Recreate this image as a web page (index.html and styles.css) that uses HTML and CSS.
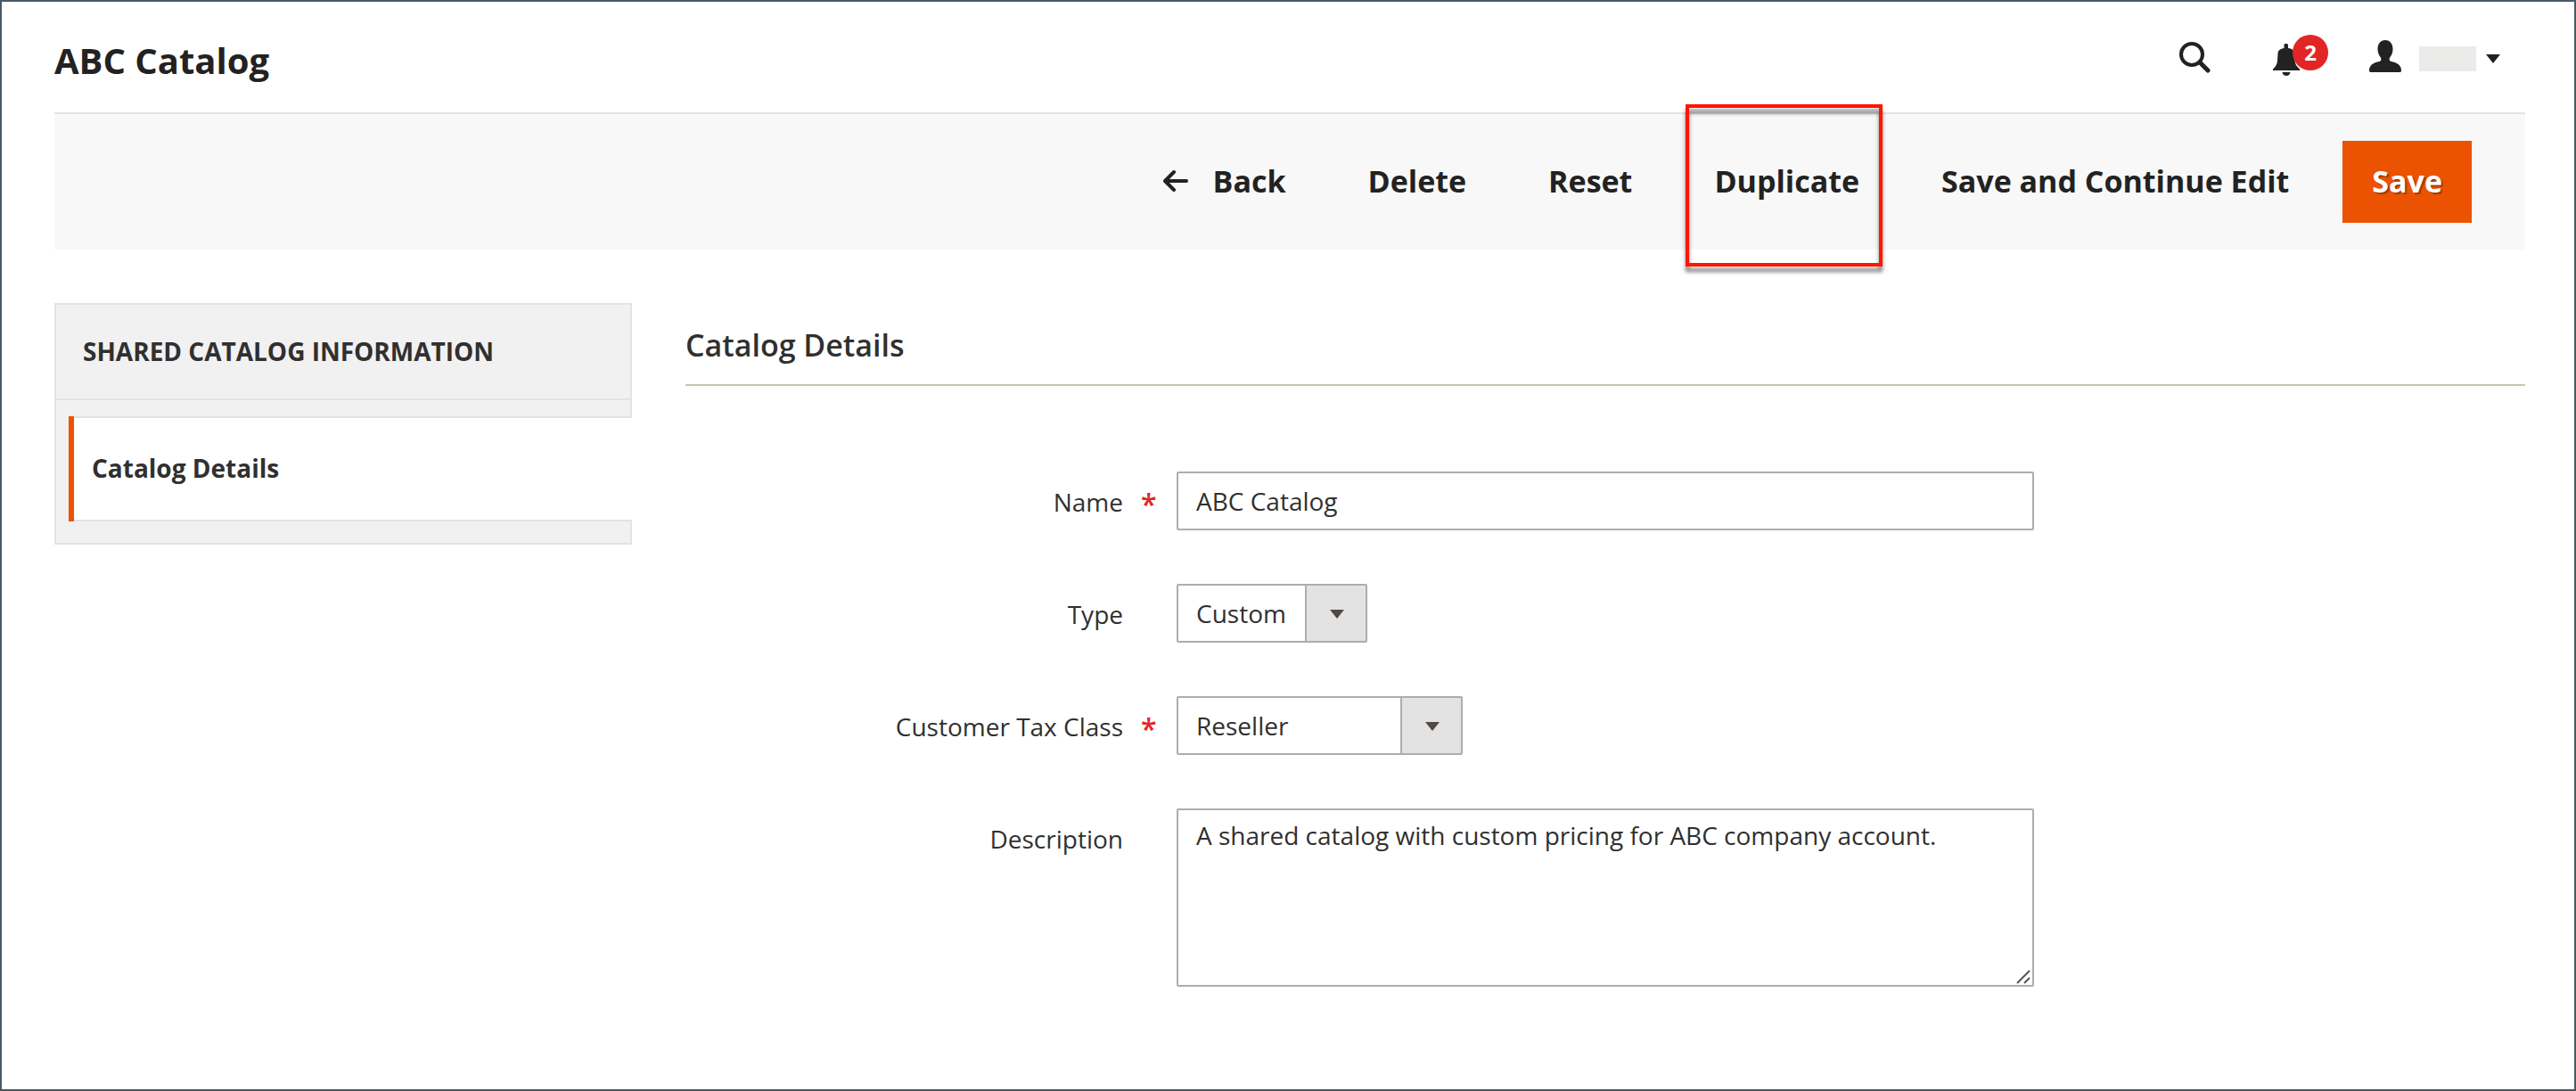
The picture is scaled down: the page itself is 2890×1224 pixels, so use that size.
FILE: index.html
```html
<!DOCTYPE html>
<html lang="en">
<head>
  <meta charset="utf-8">
  <meta name="viewport" content="width=device-width, initial-scale=1">
  <title>ABC Catalog</title>
  <link rel="stylesheet" href="styles.css">
</head>
<body>
  <div class="page">
    <header class="header">
      <h1 class="header-title">ABC Catalog</h1>
      <div class="header-tools">
        <button class="tool" type="button" aria-label="Search">
          <svg class="icon" width="36" height="36" viewBox="0 0 36 36" aria-hidden="true">
            <circle cx="15" cy="15" r="12" fill="none" stroke="currentColor" stroke-width="4"/>
            <path d="M24 24l9 9" stroke="currentColor" stroke-width="5" stroke-linecap="round"/>
          </svg>
        </button>
        <button class="tool tool-bell" type="button" aria-label="Notifications">
          <svg class="icon" width="30" height="36" viewBox="0 0 30 36" aria-hidden="true">
            <path fill="currentColor" d="M12.500 5V2a2 2 0 0 1 4.500 0v3c5 .6 7.500 3 7.500 7v5c0 6 2 8 5.500 11.500V30H0v-1.500C4 25 5 22 5.200 16l.3-5c.2-3.600 3-5.500 7-6z"/>
            <path fill="currentColor" d="M10.500 32h9c-.5 2.500-2 4-4.500 4s-4-1.500-4.500-4z"/>
          </svg>
          <span class="badge">2</span>
        </button>
        <button class="tool tool-user" type="button" aria-label="Account">
          <svg class="icon" width="36" height="36" viewBox="0 0 36 36" aria-hidden="true">
            <path fill="currentColor" d="M18 0c5.500 0 8.500 4.500 8.500 10 0 4-1.500 7.500-3.500 9.800-.8 1.500-.5 3.700 1.500 4.200C31.500 25 36 28.500 36 34c0 1.200-.4 2-1.500 2h-33C.4 36 0 35.200 0 34c0-5.500 4.500-9 11.500-10 2-.5 2.300-2.700 1.500-4.200C11 17.500 9.500 14 9.500 10 9.500 4.500 12.500 0 18 0z"/>
          </svg>
          <span class="user-name"></span>
          <span class="caret"></span>
        </button>
      </div>
    </header>

    <div class="toolbar">
      <button class="action" type="button">
        <svg class="action-arrow" width="28" height="26" viewBox="0 0 28 26" aria-hidden="true">
          <path d="M12 3L2 13l10 10M3 13h23" fill="none" stroke="currentColor" stroke-width="4" stroke-linecap="round" stroke-linejoin="round"/>
        </svg>
        Back
      </button>
      <button class="action" type="button">Delete</button>
      <button class="action" type="button">Reset</button>
      <button class="action action-marked" type="button">Duplicate</button>
      <button class="action" type="button">Save and Continue Edit</button>
      <button class="action action-primary" type="submit" form="catalog-form">Save</button>
    </div>

    <div class="columns">
      <nav class="side" aria-labelledby="side-title">
        <h2 class="side-title" id="side-title">SHARED CATALOG INFORMATION</h2>
        <a class="side-item" href="#catalog-details">Catalog Details</a>
      </nav>

      <main class="main" id="catalog-details">
        <h2 class="section-title">Catalog Details</h2>
        <form class="form" id="catalog-form">
          <div class="field">
            <label class="label required" for="name">Name</label>
            <input class="control" id="name" type="text" value="ABC Catalog">
          </div>
          <div class="field">
            <label class="label" for="type">Type</label>
            <div class="select select-short">
              <select class="control" id="type"><option>Custom</option></select>
            </div>
          </div>
          <div class="field">
            <label class="label required" for="tax-class">Customer Tax Class</label>
            <div class="select select-medium">
              <select class="control" id="tax-class"><option>Reseller</option></select>
            </div>
          </div>
          <div class="field">
            <label class="label" for="description">Description</label>
            <div class="text-area">
              <textarea class="control" id="description">A shared catalog with custom pricing for ABC company account.</textarea>
              <svg class="grip" width="16" height="16" viewBox="0 0 16 16" aria-hidden="true">
                <path d="M1 15L15 1M9 15l6-6" fill="none" stroke="#555" stroke-width="2"/>
              </svg>
            </div>
          </div>
        </form>
      </main>
    </div>
  </div>
</body>
</html>
```

FILE: styles.css
```css
*,
*::before,
*::after {
  box-sizing: border-box;
}

body {
  margin: 0;
  background: #fff;
  color: #303030;
  font-family: "Open Sans", "Noto Sans", sans-serif;
  font-size: 28px;
  line-height: 38px;
}

button,
input,
select,
textarea {
  margin: 0;
  color: inherit;
  font: inherit;
}

button {
  padding: 0;
  border: 0;
  background: none;
  cursor: pointer;
}

h1,
h2 {
  margin: 0;
}

.page {
  min-height: 100vh;
  padding: 0 55px 60px 59px;
  border: 2px solid #485a63;
}

/* Header */

.header {
  display: flex;
  align-items: center;
  justify-content: space-between;
  height: 124px;
  color: #222;
}

.header-title {
  padding-top: 8px;
  font-size: 40px;
  font-weight: 700;
  line-height: 52px;
}

.header-tools {
  display: flex;
  align-items: center;
  gap: 70px;
  padding-right: 28px;
}

.tool {
  display: flex;
  align-items: center;
  position: relative;
}

.icon {
  display: block;
}

.tool-bell {
  padding-top: 6px;
}

.badge {
  position: absolute;
  top: -4px;
  left: 22px;
  width: 40px;
  height: 40px;
  border-radius: 50%;
  background: #e22626;
  color: #fff;
  font-size: 24px;
  font-weight: 700;
  line-height: 40px;
  text-align: center;
}

.tool-user {
  gap: 20px;
  margin-left: 8px;
  padding-bottom: 3px;
}

.user-name {
  width: 64px;
  height: 28px;
  margin-top: 7px;
  background: #ebebe9;
}

.caret {
  width: 16px;
  height: 10px;
  margin: 7px 0 0 -9px;
  background: currentColor;
  clip-path: polygon(0 0, 100% 0, 50% 100%);
}

/* Page actions */

.toolbar {
  display: flex;
  align-items: center;
  justify-content: flex-end;
  gap: 92px;
  padding: 30px 60px;
  border-top: 2px solid #e3e3e3;
  background: #f8f8f8;
}

.action {
  display: flex;
  align-items: center;
  gap: 28px;
  position: relative;
  height: 92px;
  padding-bottom: 2px;
  color: #222;
  font-size: 34px;
  font-weight: 700;
  white-space: nowrap;
}

.action-marked::after {
  content: "";
  position: absolute;
  inset: -41px -26px -49px -32px;
  border: 4px solid #ff1500;
  filter: drop-shadow(0 6px 2px rgba(0, 0, 0, 0.5));
}

.action-primary {
  margin-left: -32px;
  padding: 0 33px 2px;
  background: #eb5202;
  color: #fff;
  text-shadow: 2px 2px 0 rgba(0, 0, 0, 0.3);
}

/* Columns */

.columns {
  display: grid;
  grid-template-columns: 648fr 2064fr;
  gap: 60px;
  align-items: start;
  margin-top: 60px;
}

.side {
  padding-bottom: 24px;
  border: 2px solid #e3e3e3;
  background: #f1f1f1;
}

.side-title {
  padding: 33px 30px 34px;
  border-bottom: 2px solid #e3e3e3;
  font-size: 28px;
  font-weight: 700;
}

.side-item {
  display: block;
  margin: 18px -2px 0 14px;
  padding: 39px 26px 41px;
  background: #fff;
  box-shadow:
    inset 6px 0 #eb5202,
    inset 0 2px #e3e3e3,
    inset 0 -2px #e3e3e3;
  color: inherit;
  font-weight: 700;
  text-decoration: none;
}

.section-title {
  padding: 24px 0 21px;
  border-bottom: 2px solid #cac3b4;
  font-size: 34px;
  font-weight: 600;
  line-height: 46px;
}

/* Form */

.form {
  display: grid;
  gap: 60px;
  padding-top: 96px;
}

.field {
  display: grid;
  grid-template-columns: 491fr 962fr 491fr;
  column-gap: 60px;
  align-items: start;
}

.label {
  justify-self: end;
  position: relative;
  padding-top: 15px;
}

.required::after {
  content: "*";
  position: absolute;
  left: calc(100% + 20px);
  color: #e22626;
  font-size: 32px;
  font-weight: 600;
  line-height: 44px;
}

.control {
  display: block;
  width: 100%;
  height: 66px;
  padding: 0 20px;
  border: 2px solid #adadad;
  border-radius: 2px;
  background: #fff;
  outline: 0;
}

.select {
  position: relative;
  max-width: 100%;
}

.select-short {
  width: 214px;
}

.select-medium {
  width: 321px;
}

.select .control {
  padding-right: 90px;
  appearance: none;
  background:
    linear-gradient(#e3e3e3, #e3e3e3) right / 66px 100% no-repeat,
    linear-gradient(#adadad, #adadad) right / 68px 100% no-repeat,
    #fff;
}

.select::after {
  content: "";
  position: absolute;
  top: 29px;
  right: 26px;
  width: 16px;
  height: 10px;
  background: #514943;
  clip-path: polygon(0 0, 100% 0, 50% 100%);
  pointer-events: none;
}

.text-area {
  position: relative;
}

.text-area .control {
  height: 200px;
  padding: 9px 20px;
  resize: none;
}

.grip {
  position: absolute;
  right: 4px;
  bottom: 3px;
}
```
